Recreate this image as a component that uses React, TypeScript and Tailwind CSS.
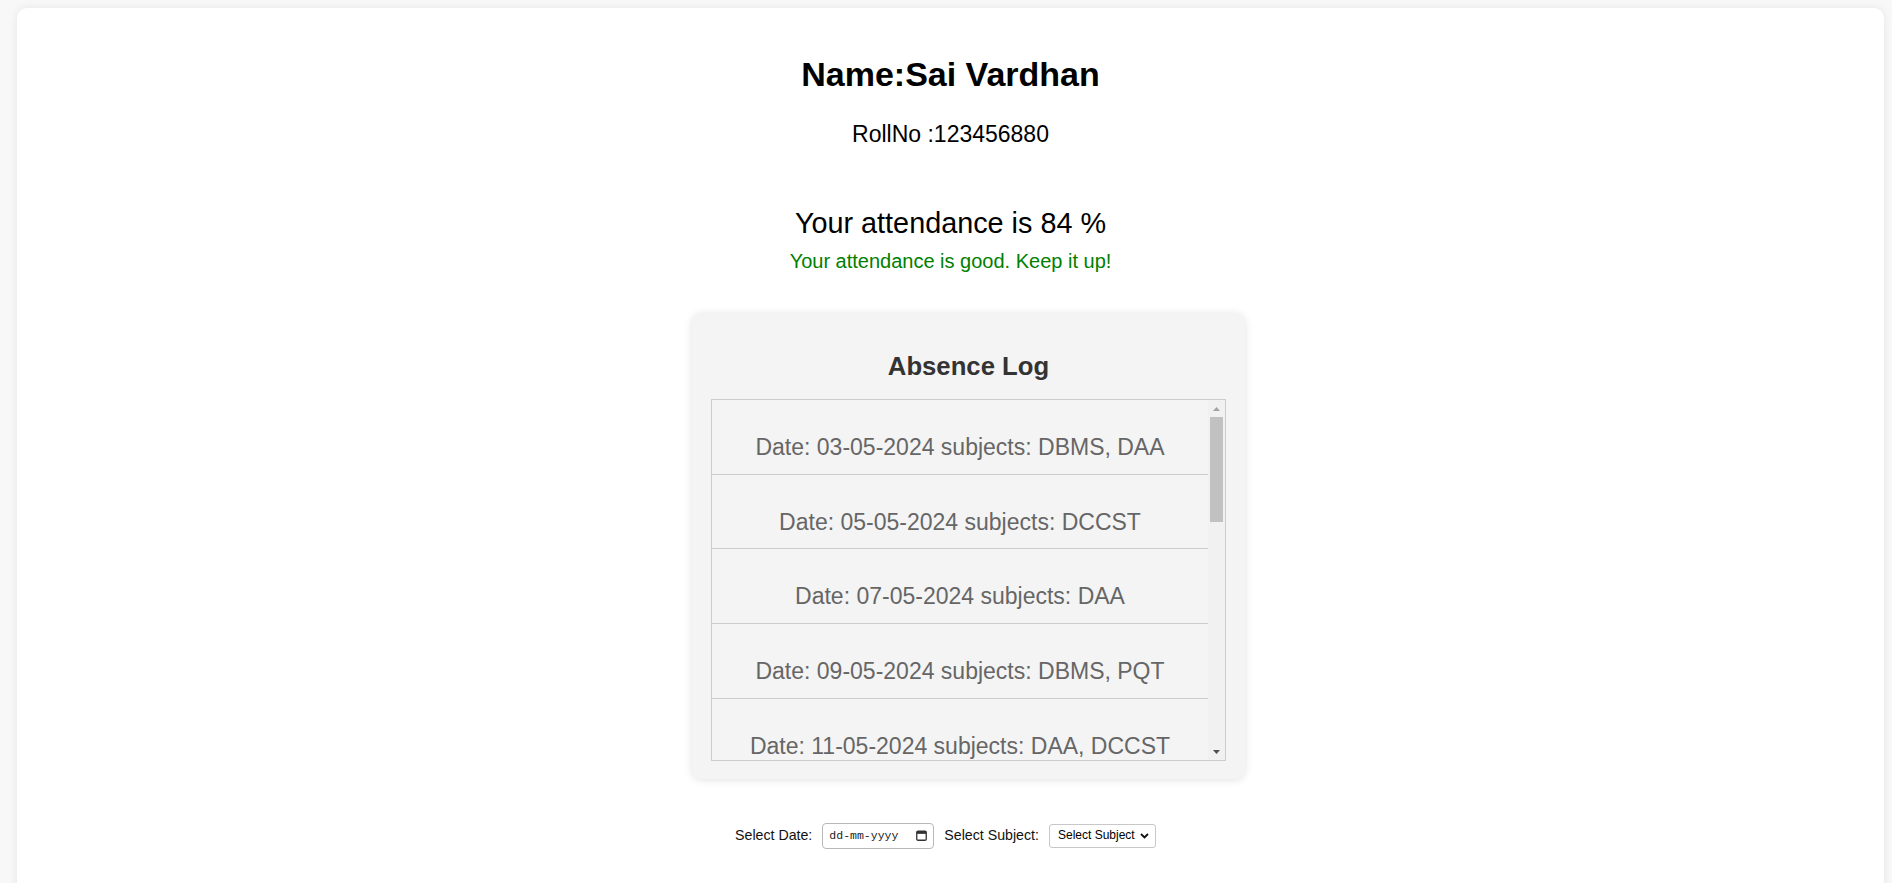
const absences = [
  { date: "03-05-2024", subjects: "DBMS, DAA" },
  { date: "05-05-2024", subjects: "DCCST" },
  { date: "07-05-2024", subjects: "DAA" },
  { date: "09-05-2024", subjects: "DBMS, PQT" },
  { date: "11-05-2024", subjects: "DAA, DCCST" },
]

function Scrollbar() {
  return (
    <div className="flex w-[17px] flex-col bg-[#f1f1f1]">
      <div className="flex h-[17px] items-center justify-center">
        <svg width="7" height="4" viewBox="0 0 7 4">
          <polygon points="3.5,0 7,4 0,4" fill="#a3a3a3" />
        </svg>
      </div>
      <div className="mx-[2px] h-[105px] bg-[#c1c1c1]" />
      <div className="flex-1" />
      <div className="flex h-[17px] items-center justify-center">
        <svg width="7" height="4" viewBox="0 0 7 4">
          <polygon points="0,0 7,0 3.5,4" fill="#505050" />
        </svg>
      </div>
    </div>
  )
}

function AbsenceLog() {
  return (
    <div className="w-[553px] rounded-[10px] bg-[#f4f4f4] px-[19px] pt-[38px] pb-[18px] shadow-[0_1px_8px_rgba(0,0,0,0.12)]">
      <h2 className="mb-[18px] text-[25.7px] leading-[30px] font-bold text-[#333]">Absence Log</h2>
      <div className="flex h-[362px] border border-[#ccc]">
        <ul className="flex-1 overflow-hidden">
          {absences.map((a) => (
            <li
              key={a.date}
              className="border-b border-[#ccc] pt-[34px] pb-[13.7px] text-[23px] leading-[26px] text-[#666]"
            >
              Date: {a.date} subjects: {a.subjects}
            </li>
          ))}
        </ul>
        <Scrollbar />
      </div>
    </div>
  )
}

function Filters() {
  return (
    <div className="mt-[43.6px] flex items-center justify-center gap-[10px] pr-[10px] text-[14.2px] leading-[17px] text-[#111]">
      <span>Select Date:</span>
      <div className="flex h-[26.4px] w-[112px] items-center justify-between rounded-[4px] border border-[#b8b8b8] bg-white pl-[6px] pr-[6px]">
        <span className="font-['Liberation_Mono',monospace] text-[11.5px] text-[#222]">dd-mm-yyyy</span>
        <svg width="11" height="11" viewBox="0 0 11 11">
          <rect x="0.75" y="1.25" width="9.5" height="9" rx="1.2" fill="none" stroke="#333" strokeWidth="1.3" />
          <rect x="0.75" y="1.25" width="9.5" height="2.6" fill="#333" />
        </svg>
      </div>
      <span>Select Subject:</span>
      <div className="flex h-[24.4px] w-[107px] items-center justify-between rounded-[3px] border border-[#c8c8c8] bg-white pl-[8px] pr-[6px] text-[12px] text-black">
        <span>Select Subject</span>
        <svg width="9" height="6" viewBox="0 0 9 6">
          <polyline points="1,1 4.5,4.5 8,1" fill="none" stroke="#111" strokeWidth="1.8" />
        </svg>
      </div>
    </div>
  )
}

export default function App() {
  return (
    <div className="min-h-screen bg-[#f8f8f8] pt-[8px] pl-[17px] pr-[8px] font-['Liberation_Sans',Arial,sans-serif]">
      <div className="rounded-[10px] bg-white pt-[47px] pb-[60px] text-center shadow-[0_0_10px_rgba(0,0,0,0.08)]">
        <h1 className="text-[34px] leading-[39px] font-bold text-black">Name:Sai Vardhan</h1>
        <p className="mt-[27px] text-[23px] leading-[26px] text-black">RollNo :123456880</p>
        <h2 className="mt-[60px] text-[28.8px] leading-[33px] text-black">Your attendance is 84 %</h2>
        <p className="mt-[10px] text-[20px] leading-[23px] text-[#008000]">Your attendance is good. Keep it up!</p>
        <div className="mt-[40px] flex justify-center pl-[36px]">
          <AbsenceLog />
        </div>
        <Filters />
      </div>
    </div>
  )
}
